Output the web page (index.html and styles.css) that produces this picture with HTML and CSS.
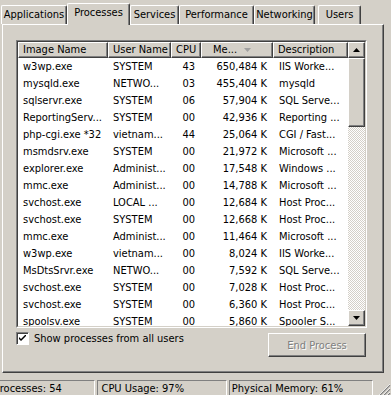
FILE: index.html
```html
<!DOCTYPE html>
<html lang="en">
<head>
  <meta charset="UTF-8">
  <title>Windows Task Manager - Processes</title>
  <link rel="stylesheet" href="styles.css">
</head>
<body>
  <div class="tabs">
    <div class="tab tab-apps">Applications</div>
    <div class="tab tab-procs tab-active">Processes</div>
    <div class="tab tab-services">Services</div>
    <div class="tab tab-perf">Performance</div>
    <div class="tab tab-net">Networking</div>
    <div class="tab tab-users">Users</div>
  </div>

  <div class="panel">
    <div class="listview">
      <div class="listview-inner">
        <div class="list-main">
          <div class="row row-head">
            <div class="hcell">Image Name</div>
            <div class="hcell">User Name</div>
            <div class="hcell num">CPU</div>
            <div class="hcell hcell-mem">Me...
              <svg class="sort-arrow" width="7" height="4" viewBox="0 0 7 4"><path d="M0 0H7L3.5 4Z" fill="#a0a0a0"/></svg>
            </div>
            <div class="hcell">Description</div>
          </div>
          <div class="row"><div class="cell">w3wp.exe</div><div class="cell">SYSTEM</div><div class="cell num">43</div><div class="cell num">650,484 K</div><div class="cell desc">IIS Worke...</div></div>
          <div class="row"><div class="cell">mysqld.exe</div><div class="cell">NETWO...</div><div class="cell num">03</div><div class="cell num">455,404 K</div><div class="cell desc">mysqld</div></div>
          <div class="row"><div class="cell">sqlservr.exe</div><div class="cell">SYSTEM</div><div class="cell num">06</div><div class="cell num">57,904 K</div><div class="cell desc">SQL Serve...</div></div>
          <div class="row"><div class="cell">ReportingServ...</div><div class="cell">SYSTEM</div><div class="cell num">00</div><div class="cell num">42,936 K</div><div class="cell desc">Reporting ...</div></div>
          <div class="row"><div class="cell">php-cgi.exe *32</div><div class="cell">vietnam...</div><div class="cell num">44</div><div class="cell num">25,064 K</div><div class="cell desc">CGI / Fast...</div></div>
          <div class="row"><div class="cell">msmdsrv.exe</div><div class="cell">SYSTEM</div><div class="cell num">00</div><div class="cell num">21,972 K</div><div class="cell desc">Microsoft ...</div></div>
          <div class="row"><div class="cell">explorer.exe</div><div class="cell">Administ...</div><div class="cell num">00</div><div class="cell num">17,548 K</div><div class="cell desc">Windows ...</div></div>
          <div class="row"><div class="cell">mmc.exe</div><div class="cell">Administ...</div><div class="cell num">00</div><div class="cell num">14,788 K</div><div class="cell desc">Microsoft ...</div></div>
          <div class="row"><div class="cell">svchost.exe</div><div class="cell">LOCAL ...</div><div class="cell num">00</div><div class="cell num">12,684 K</div><div class="cell desc">Host Proc...</div></div>
          <div class="row"><div class="cell">svchost.exe</div><div class="cell">SYSTEM</div><div class="cell num">00</div><div class="cell num">12,668 K</div><div class="cell desc">Host Proc...</div></div>
          <div class="row"><div class="cell">mmc.exe</div><div class="cell">Administ...</div><div class="cell num">00</div><div class="cell num">11,464 K</div><div class="cell desc">Microsoft ...</div></div>
          <div class="row"><div class="cell">w3wp.exe</div><div class="cell">vietnam...</div><div class="cell num">00</div><div class="cell num">8,024 K</div><div class="cell desc">IIS Worke...</div></div>
          <div class="row"><div class="cell">MsDtsSrvr.exe</div><div class="cell">NETWO...</div><div class="cell num">00</div><div class="cell num">7,592 K</div><div class="cell desc">SQL Serve...</div></div>
          <div class="row"><div class="cell">svchost.exe</div><div class="cell">SYSTEM</div><div class="cell num">00</div><div class="cell num">7,028 K</div><div class="cell desc">Host Proc...</div></div>
          <div class="row"><div class="cell">svchost.exe</div><div class="cell">SYSTEM</div><div class="cell num">00</div><div class="cell num">6,360 K</div><div class="cell desc">Host Proc...</div></div>
          <div class="row"><div class="cell">spoolsv.exe</div><div class="cell">SYSTEM</div><div class="cell num">00</div><div class="cell num">5,860 K</div><div class="cell desc">Spooler S...</div></div>
        </div>

        <div class="scrollbar">
          <div class="sb-btn">
            <svg width="7" height="4" viewBox="0 0 7 4"><path d="M3.5 0L7 4H0Z" fill="#000"/></svg>
          </div>
          <div class="sb-track">
            <div class="sb-thumb"></div>
          </div>
          <div class="sb-btn">
            <svg width="7" height="4" viewBox="0 0 7 4"><path d="M0 0H7L3.5 4Z" fill="#000"/></svg>
          </div>
        </div>
      </div>
    </div>

    <div class="panel-footer">
      <label class="check">
        <span class="checkbox">
          <svg width="7" height="7" viewBox="0 0 7 7"><path d="M0 2V4L2 6L7 1V-1L2 4Z" fill="#000"/></svg>
        </span>
        Show processes from all users
      </label>
      <button class="btn" disabled>End Process</button>
    </div>
  </div>

  <div class="statusbar">
    <div class="pane pane-procs">Processes: 54</div>
    <div class="pane pane-cpu">CPU Usage: 97%</div>
    <div class="pane pane-mem">Physical Memory: 61%</div>
    <svg class="grip" width="13" height="13" viewBox="0 0 13 13">
      <path d="M12 1L1 12M12 5L5 12M12 9L9 12" stroke="#808080" stroke-width="1.4"/>
      <path d="M12 0L0 12M12 4L4 12M12 8L8 12" stroke="#fff" stroke-width="0.8"/>
    </svg>
  </div>
</body>
</html>
```

FILE: styles.css
```css
* {
  box-sizing: border-box;
}

body {
  margin: 0;
  width: 391px;
  height: 395px;
  overflow: hidden;
  background: #d4d0c8;
  font-family: "DejaVu Sans Condensed", "DejaVu Sans", sans-serif;
  font-size: 11px;
  color: #000;
}

/* tabs */
.tabs {
  display: flex;
  align-items: flex-end;
  height: 24px;
  padding-left: 1px;
}

.tab {
  height: 19px;
  line-height: 17px;
  text-align: center;
  white-space: nowrap;
  background: #d4d0c8;
  border-top: 1px solid #fff;
  border-left: 1px solid #fff;
  border-right: 1px solid #404040;
  border-radius: 2px 2px 0 0;
  box-shadow: inset -1px 0 #808080;
}

.tab-active {
  position: relative;
  z-index: 1;
  height: 22px;
  margin-bottom: -1px;
}

.tab-apps { width: 66px; }
.tab-procs { width: 63px; }
.tab-services { width: 49px; }
.tab-perf { width: 75px; }
.tab-net { width: 61px; }
.tab-users { width: 43px; margin-left: 3px; }

/* tab page */
.panel {
  margin-left: 2px;
  width: 382px;
  height: 349px;
  padding: 15px 0 0 13px;
  border-top: 1px solid #fff;
  border-left: 1px solid #fff;
  border-right: 1px solid #404040;
  border-bottom: 1px solid #404040;
  box-shadow: inset -1px -1px #808080;
}

.listview {
  width: 351px;
  height: 288px;
  border: 1px solid;
  border-color: #808080 #fff #fff #808080;
}

.listview-inner {
  display: flex;
  height: 100%;
  background: #fff;
  border: 1px solid;
  border-color: #404040 #d4d0c8 #d4d0c8 #404040;
}

.list-main {
  width: 330px;
  overflow: hidden;
}

.row {
  display: grid;
  grid-template-columns: 90px 63px 30px 72px 75px;
  height: 17px;
  line-height: 17px;
}

.row-head {
  height: 16px;
  line-height: 14px;
}

.hcell {
  padding: 0 4px;
  white-space: nowrap;
  overflow: hidden;
  background: #d4d0c8;
  border-top: 1px solid #fff;
  border-left: 1px solid #fff;
  border-right: 1px solid #404040;
  border-bottom: 1px solid #404040;
  box-shadow: inset -1px -1px #808080;
}

.hcell-mem {
  padding-left: 11px;
}

.sort-arrow {
  margin-left: 4px;
  vertical-align: 1px;
}

.cell {
  padding: 0 4px 0 5px;
  white-space: nowrap;
  overflow: hidden;
}

.num {
  text-align: right;
  padding-right: 6px;
}

.desc {
  padding-left: 6px;
}

/* scrollbar */
.scrollbar {
  display: flex;
  flex-direction: column;
  width: 17px;
}

.sb-btn {
  display: flex;
  align-items: center;
  justify-content: center;
  height: 16px;
  background: #d4d0c8;
  border: 1px solid;
  border-color: #fff #404040 #404040 #fff;
  box-shadow: inset -1px -1px #808080;
}

.sb-track {
  flex: 1;
  background: repeating-conic-gradient(#fff 0 25%, #d4d0c8 0 50%) 0 0 / 2px 2px;
}

.sb-thumb {
  height: 69px;
  background: #d4d0c8;
  border: 1px solid;
  border-color: #fff #404040 #404040 #fff;
  box-shadow: inset -1px -1px #808080;
}

/* footer */
.panel-footer {
  display: flex;
  justify-content: space-between;
  align-items: flex-start;
  width: 351px;
}

.check {
  display: flex;
  align-items: center;
  gap: 5px;
  height: 13px;
  margin-top: 4px;
  white-space: nowrap;
}

.checkbox {
  display: flex;
  align-items: center;
  justify-content: center;
  width: 13px;
  height: 13px;
  background: #fff;
  border: 1px solid;
  border-color: #808080 #fff #fff #808080;
  box-shadow: inset 1px 1px #404040;
}

.btn {
  width: 98px;
  height: 24px;
  margin-top: 5px;
  margin-right: 1px;
  font: inherit;
  color: #808080;
  text-shadow: 1px 1px #fff;
  background: #d4d0c8;
  border: 1px solid;
  border-color: #fff #404040 #404040 #fff;
  box-shadow: inset -1px -1px #808080;
}

/* status bar */
.statusbar {
  display: flex;
  gap: 2px;
  height: 25px;
  padding-top: 7px;
  margin-left: -10px;
}

.pane {
  height: 18px;
  line-height: 16px;
  padding-left: 3px;
  white-space: nowrap;
  border: 1px solid;
  border-color: #808080 #fff #fff #808080;
}

.pane-procs { width: 106px; }
.pane-cpu { width: 130px; }
.pane-mem { width: 145px; padding-left: 2px; }

.grip {
  align-self: flex-end;
  margin-left: 3px;
  margin-bottom: 1px;
}
```
